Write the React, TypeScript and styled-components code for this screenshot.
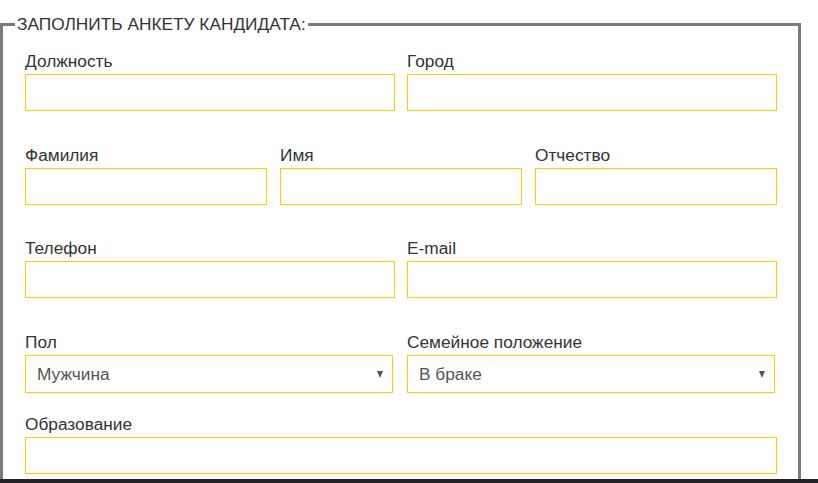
import styled, { createGlobalStyle } from "styled-components";

const GlobalStyle = createGlobalStyle`
  body {
    margin: 0;
    background: #fff;
    font-family: "Liberation Sans", Arial, sans-serif;
    color: #333;
  }
`;

type Option = { value: string; label: string };

const genderOptions: Option[] = [
  { value: "m", label: "Мужчина" },
  { value: "f", label: "Женщина" },
];

const familyOptions: Option[] = [
  { value: "married", label: "В браке" },
  { value: "single", label: "Не в браке" },
];

const TextField = ({ label, name }: { label: string; name: string }) => {
  return (
    <Field>
      <Label htmlFor={name}>{label}</Label>
      <Input id={name} name={name} type="text" />
    </Field>
  );
};

const SelectField = ({
  label,
  name,
  options,
}: {
  label: string;
  name: string;
  options: Option[];
}) => {
  return (
    <Field>
      <Label htmlFor={name}>{label}</Label>
      <SelectWrap>
        <Select id={name} name={name} defaultValue={options[0].value}>
          {options.map((o) => (
            <option key={o.value} value={o.value}>
              {o.label}
            </option>
          ))}
        </Select>
      </SelectWrap>
    </Field>
  );
};

const App = () => {
  return (
    <Page>
      <GlobalStyle />
      <Viewport>
        <Fieldset>
          <Legend>ЗАПОЛНИТЬ АНКЕТУ КАНДИДАТА:</Legend>
          <Form>
            <Row $cols={2}>
              <TextField label="Должность" name="position" />
              <TextField label="Город" name="city" />
            </Row>
            <Row $cols={3}>
              <TextField label="Фамилия" name="surname" />
              <TextField label="Имя" name="name" />
              <TextField label="Отчество" name="patronymic" />
            </Row>
            <Row $cols={2}>
              <TextField label="Телефон" name="phone" />
              <TextField label="E-mail" name="email" />
            </Row>
            <Row $cols={2}>
              <SelectField label="Пол" name="gender" options={genderOptions} />
              <SelectField
                label="Семейное положение"
                name="family"
                options={familyOptions}
              />
            </Row>
            <Row $cols={1}>
              <TextField label="Образование" name="education" />
            </Row>
          </Form>
        </Fieldset>
      </Viewport>
      <Footer />
    </Page>
  );
};

const Page = styled.div`
  height: 483px;
  display: grid;
  grid-template-rows: 1fr 4px;
  overflow: hidden;
`;

const Viewport = styled.div`
  overflow: hidden;
`;

const Footer = styled.div`
  background: #222326;
`;

const Fieldset = styled.fieldset`
  box-sizing: border-box;
  width: 801px;
  margin: 14px 0 0;
  padding: 0 12px;
  border: 3px solid #7b7b7b;
  border-bottom: none;
  min-height: 600px;
`;

const Legend = styled.legend`
  padding: 0 2px;
  font-size: 17.3px;
  color: #333;
`;

const Form = styled.div`
  padding: 16px 9px 0 10px;
`;

const Row = styled.div<{ $cols: number }>`
  display: grid;
  grid-template-columns: repeat(${(p) => p.$cols}, 1fr);
  column-gap: ${(p) => (p.$cols === 3 ? 13 : 12)}px;
  margin-bottom: 21px;
`;

const Field = styled.div`
  min-width: 0;
`;

const Label = styled.label`
  display: block;
  font-size: 17.3px;
  line-height: 20px;
  margin-bottom: 3px;
  color: #333;
`;

const Input = styled.input`
  display: block;
  box-sizing: border-box;
  width: 100%;
  height: 37px;
  margin: 0 0 12.7px;
  padding: 0 10px;
  border: 1px solid #fc0;
  border-radius: 0;
  background: #fff;
  font-family: inherit;
  font-size: 17.3px;
  color: #555;
  outline: none;
`;

const SelectWrap = styled.div`
  position: relative;
  width: calc(100% - 2px);

  &::after {
    content: "";
    position: absolute;
    right: 10px;
    top: 16px;
    border-left: 3.5px solid transparent;
    border-right: 3.5px solid transparent;
    border-top: 7px solid #555;
    pointer-events: none;
  }
`;

const Select = styled.select`
  display: block;
  box-sizing: border-box;
  width: 100%;
  height: 38px;
  margin: 0;
  padding: 0 24px 0 11px;
  border: 1px solid #fc0;
  border-radius: 0;
  background: #fff;
  appearance: none;
  font-family: inherit;
  font-size: 17.3px;
  color: #555;
  outline: none;
`;

export default App;
